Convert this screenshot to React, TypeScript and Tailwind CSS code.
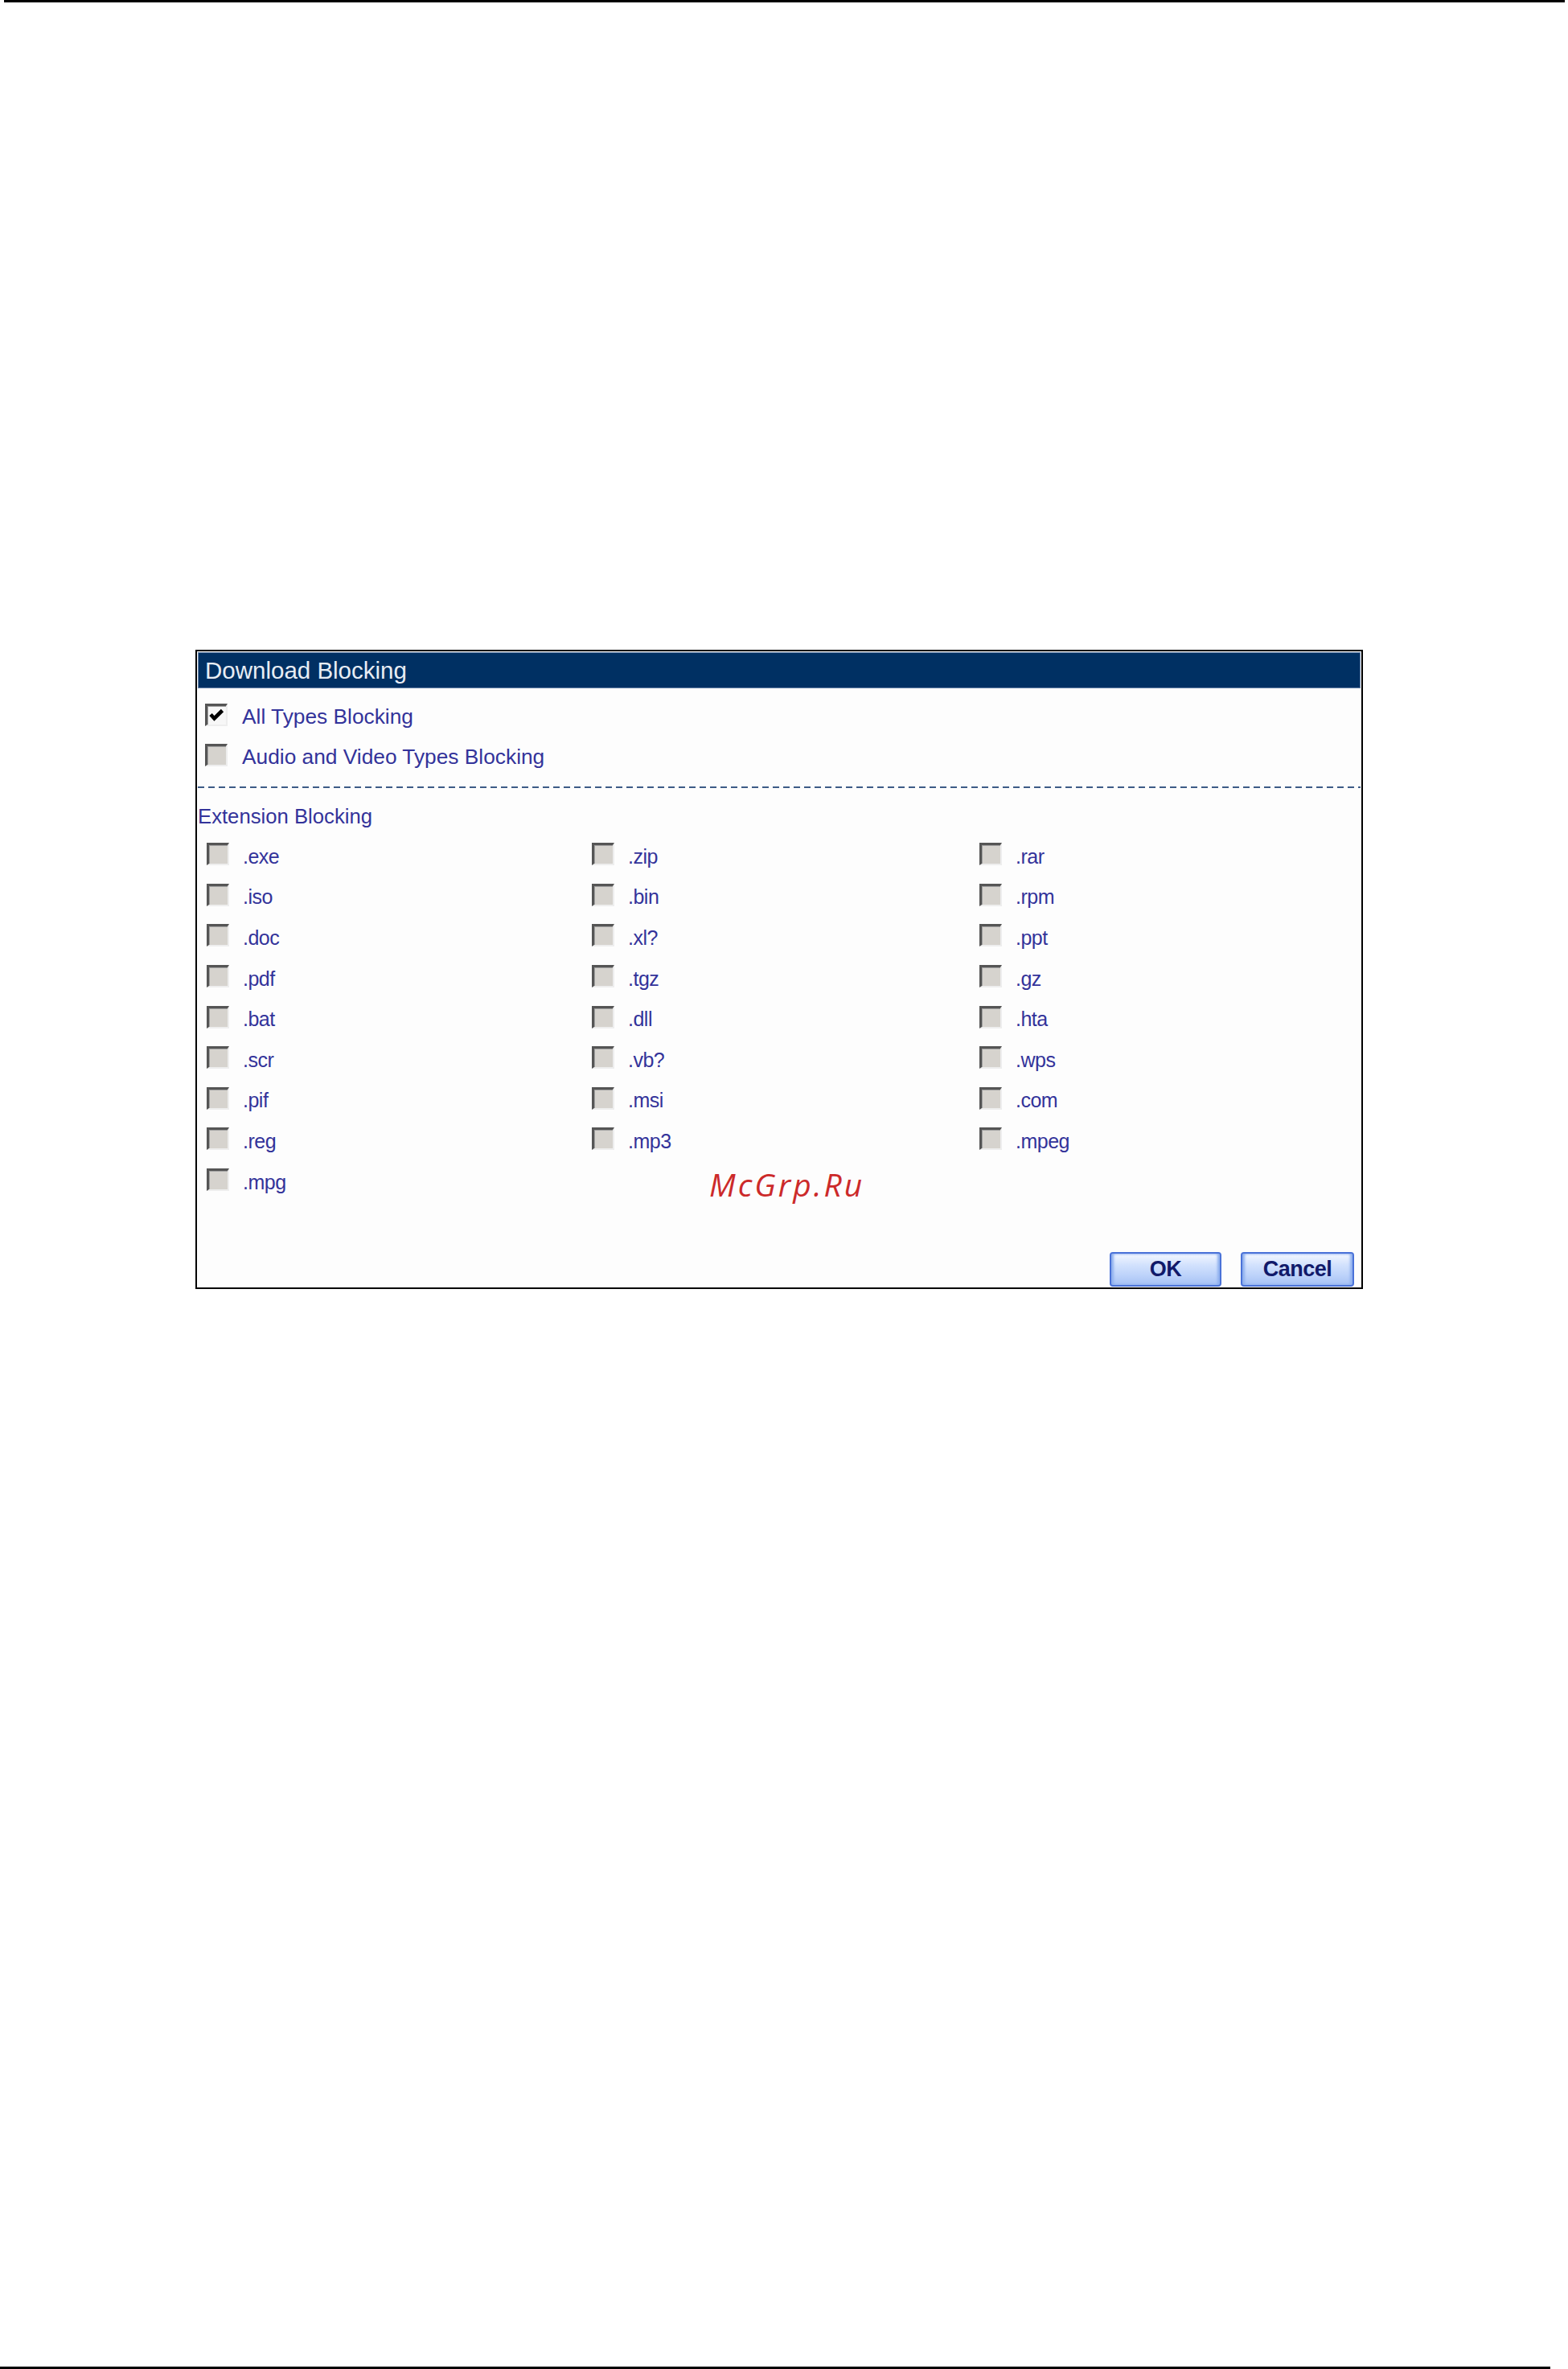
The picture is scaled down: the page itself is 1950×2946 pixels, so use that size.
import React from "react";

const FONT = { fontFamily: '"Liberation Sans", Arial, sans-serif' };

function Box({ checked = false }: { checked?: boolean }) {
  return (
    <span
      className={`relative inline-block w-[28px] h-[28px] shrink-0 border-t-[3px] border-l-[3px] border-t-[#555555] border-l-[#555555] border-b-[2px] border-r-[2px] border-b-[#eeeeee] border-r-[#eeeeee] shadow-[inset_1px_1px_0_#a0a0a0] ${
        checked ? "bg-[#f7f7f7]" : "bg-[#d6d3ce]"
      }`}
    >
      {checked && (
        <svg viewBox="0 0 23 23" className="absolute inset-0 w-full h-full">
          <path d="M4 10.5 L8.5 15.5 L18.5 5.5" fill="none" stroke="#000" strokeWidth="4.6" strokeLinecap="butt" strokeLinejoin="miter" />
        </svg>
      )}
    </span>
  );
}

const exts: string[][] = [
  [".exe", ".zip", ".rar"],
  [".iso", ".bin", ".rpm"],
  [".doc", ".xl?", ".ppt"],
  [".pdf", ".tgz", ".gz"],
  [".bat", ".dll", ".hta"],
  [".scr", ".vb?", ".wps"],
  [".pif", ".msi", ".com"],
  [".reg", ".mp3", ".mpeg"],
  [".mpg", "", ""],
];

function Btn({ label, w }: { label: string; w: string }) {
  return (
    <button
      className={`${w} h-[43px] rounded-[4px] border-2 border-[#4a72d8] bg-[linear-gradient(to_bottom,#f4f8ff_0%,#d3e2fd_35%,#bcd2fa_70%,#a6c1f4_100%)] shadow-[inset_3px_0_3px_#8fb0ee,inset_-3px_0_3px_#8fb0ee] flex items-center justify-center text-[27px] font-bold text-[#111a6a] leading-none tracking-[-0.5px]`}
      style={FONT}
    >
      {label}
    </button>
  );
}

export default function App() {
  return (
    <div className="w-[1950px] h-[2946px] bg-white flex flex-col relative" style={FONT}>
      <div className="h-[3px] bg-black ml-[5px] mr-[4px]" />

      <div className="ml-[243px] mt-[805px] w-[1452px] h-[795px] border-2 border-black bg-[#fdfdfd] flex flex-col relative">
        <div className="mx-[1px] mt-[1px] h-[45px] bg-[#003063] border border-[#6a86ab] flex items-center pl-[8px]">
          <span className="text-[29.5px] text-[#e8edf4] leading-none">Download Blocking</span>
        </div>

        <div className="mt-[8px] h-[50px] flex items-center pl-[10px] gap-[18px]">
          <Box checked />
          <span className="text-[26.3px] text-[#33339a] leading-none pt-[4px]">All Types Blocking</span>
        </div>
        <div className="h-[50px] flex items-center pl-[10px] gap-[18px]">
          <Box />
          <span className="text-[26.3px] text-[#33339a] leading-none pt-[4px]">Audio and Video Types Blocking</span>
        </div>

        <div className="mt-[14px] h-[2px] mx-[1px] bg-[repeating-linear-gradient(90deg,#3d5c86_0px,#3d5c86_8px,transparent_8px,transparent_13px)]" />

        <div className="mt-[15px] h-[42px] flex items-center pl-[1px]">
          <span className="text-[25.7px] text-[#33339a] leading-none">Extension Blocking</span>
        </div>

        <div className="grid grid-cols-[479px_482px_1fr]">
          {exts.map((row, ri) =>
            row.map((e, ci) => (
              <div key={`${ri}-${ci}`} className="h-[50.6px] flex items-center pl-[12px] gap-[17px]">
                {e && (
                  <>
                    <Box />
                    <span className="text-[25px] text-[#33339a] leading-none pt-[6px] tracking-[-0.5px]">{e}</span>
                  </>
                )}
              </div>
            ))
          )}
        </div>

        <div className="flex-1" />

        <div className="flex justify-end gap-[24px] pr-[9px] pb-[1px]">
          <Btn label="OK" w="w-[139px]" />
          <Btn label="Cancel" w="w-[141px]" />
        </div>

        <span
          className="absolute left-[637px] top-[643px] text-[39px] italic text-[#cc2a2a] tracking-[3px] leading-none"
          style={{ fontFamily: '"Open Sans", "DejaVu Sans", sans-serif' }}
        >
          McGrp.Ru
        </span>
      </div>

      <div className="flex-1" />
      <div className="h-[3px] bg-black mr-[22px]" />
    </div>
  );
}
